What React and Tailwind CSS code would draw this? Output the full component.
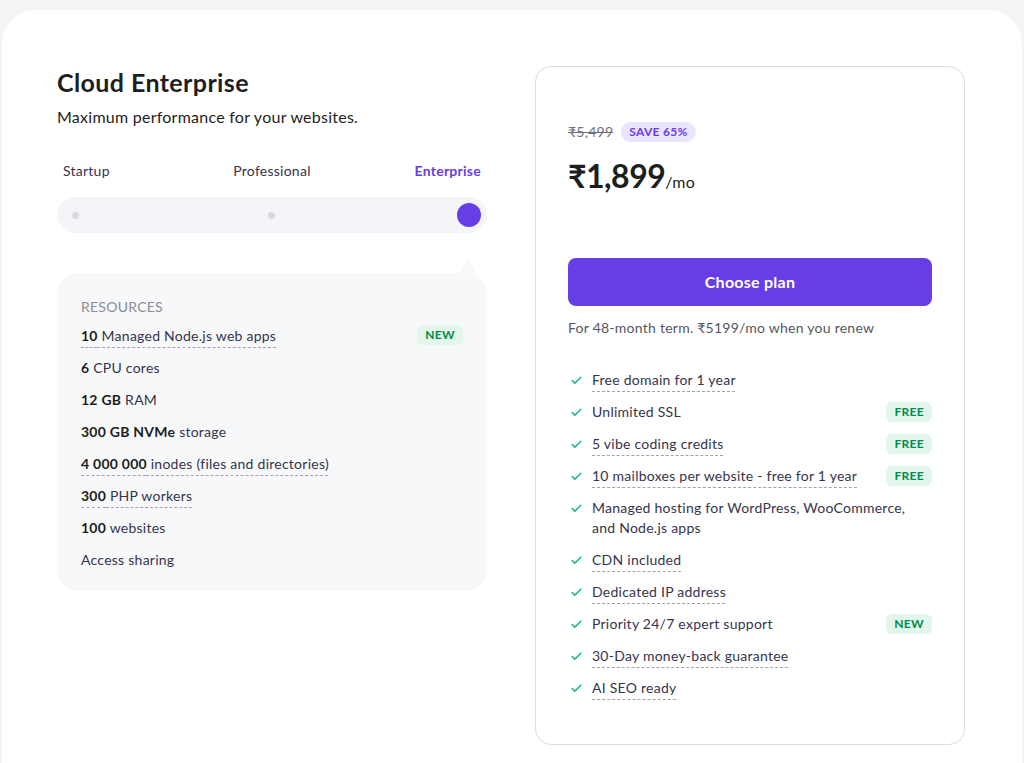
import React from "react";
import { Check } from "lucide-react";

const resources = [
    { bold: "10", rest: " Managed Node.js web apps", dashed: true, badge: "NEW" },
    { bold: "6", rest: " CPU cores" },
    { bold: "12 GB", rest: " RAM" },
    { bold: "300 GB NVMe", rest: " storage" },
    { bold: "4 000 000", rest: " inodes (files and directories)", dashed: true },
    { bold: "300", rest: " PHP workers", dashed: true },
    { bold: "100", rest: " websites" },
    { bold: "", rest: "Access sharing" },
];

const features = [
    { text: "Free domain for 1 year", dashed: true },
    { text: "Unlimited SSL", badge: "FREE" },
    { text: "5 vibe coding credits", dashed: true, badge: "FREE" },
    { text: "10 mailboxes per website - free for 1 year", dashed: true, badge: "FREE" },
    { text: "Managed hosting for WordPress, WooCommerce, and Node.js apps" },
    { text: "CDN included", dashed: true },
    { text: "Dedicated IP address", dashed: true },
    { text: "Priority 24/7 expert support", badge: "NEW" },
    { text: "30-Day money-back guarantee", dashed: true },
    { text: "AI SEO ready", dashed: true },
];

const dashed = "underline decoration-dashed decoration-[#a3a3ad] decoration-1 underline-offset-[6px]";

function Badge({ children }) {
    return (
        <span className="shrink-0 rounded-md bg-[#e2f6ec] px-2 h-5 flex items-center text-[12px] font-bold tracking-wide text-[#008a4b]">
            {children}
        </span>
    );
}

export default function App() {
    return (
        <div className="min-h-screen bg-[#f4f4f4] pt-[10px] px-[2px] text-[#1d1e20] tracking-[0.25px]" style={{ fontFamily: "Lato, 'Noto Sans', 'DejaVu Sans', sans-serif" }}>
            <div className="bg-white rounded-t-[34px] min-h-[753px] pl-[55px] pr-[57px] pt-[56px] flex justify-between">

                {/* Left: plan + slider + resources */}
                <div className="w-[430px]">
                    <h1 className="text-[25px] leading-8 font-bold tracking-[0.4px]">Cloud Enterprise</h1>
                    <p className="mt-[7px] text-[16px] leading-6">Maximum performance for your websites.</p>

                    <div className="mt-8 grid grid-cols-3 px-[6px] text-[14px] leading-5">
                        <span className="text-left text-[#36344d]">Startup</span>
                        <span className="text-center text-[#36344d]">Professional</span>
                        <span className="text-right font-bold text-[#673de6]">Enterprise</span>
                    </div>

                    <div className="mt-4 h-9 rounded-full bg-[#f4f5f8] grid grid-cols-3 items-center px-[6px]">
                        <div className="flex justify-start pl-[9px]"><span className="size-[7px] rounded-full bg-[#d8d8de]"></span></div>
                        <div className="flex justify-center"><span className="size-[7px] rounded-full bg-[#d8d8de]"></span></div>
                        <div className="flex justify-end"><span className="size-6 rounded-full bg-[#673de6]"></span></div>
                    </div>

                    {/* Resources box */}
                    <div className="relative mt-10 rounded-[20px] bg-[#f7f8fa] px-6 pt-6 pb-5">
                        <span className="absolute -top-[15px] right-[12px] w-0 h-0 border-l-[7px] border-r-[7px] border-b-[15px] border-l-transparent border-r-transparent border-b-[#f7f8fa]"></span>
                        <div className="text-[14px] leading-5 text-[#8c8c96] uppercase">Resources</div>
                        <ul className="mt-[6px] flex flex-col gap-2">
                            {resources.map((r, i) => (
                                <li key={i} className="flex items-center justify-between h-6 text-[14px]">
                                    <span className={r.dashed ? dashed : ""}>
                                        {r.bold && <span className="font-bold">{r.bold}</span>}
                                        <span className="text-[#36344d]">{r.rest}</span>
                                    </span>
                                    {r.badge && <Badge>{r.badge}</Badge>}
                                </li>
                            ))}
                        </ul>
                    </div>
                </div>

                {/* Right: pricing card */}
                <div className="w-[430px] h-[679px] rounded-2xl border border-[#dadce0] px-8 pt-[54px] pb-12">
                    <div className="flex items-center gap-2">
                        <span className="text-[14px] text-[#6d7081] line-through">₹5,499</span>
                        <span className="rounded-full bg-[#ebe4ff] px-2 h-5 flex items-center text-[12px] font-bold tracking-wide text-[#673de6]">SAVE 65%</span>
                    </div>
                    <div className="mt-[14px] flex items-baseline">
                        <span className="text-[32px] leading-10 font-bold tracking-[-0.5px]">₹1,899</span>
                        <span className="text-[16px]">/mo</span>
                    </div>

                    <button className="mt-[62px] w-full h-12 rounded-lg bg-[#673de6] text-white text-[16px] font-bold">
                        Choose plan
                    </button>
                    <p className="mt-3 text-[14px] leading-5 text-[#55575f]">For 48-month term. ₹5199/mo when you renew</p>

                    <ul className="mt-8 flex flex-col gap-3">
                        {features.map((f, i) => (
                            <li key={i} className="flex items-start justify-between text-[14px] leading-5">
                                <div className="flex items-start">
                                    <span className="w-6 h-5 flex items-center pl-[2px] shrink-0">
                                        <Check size={13} strokeWidth={2.5} className="text-[#00b090]" />
                                    </span>
                                    <span className={`text-[#36344d] ${f.dashed ? dashed : ""} ${f.text.startsWith("Managed") ? "max-w-[330px]" : ""}`}>{f.text}</span>
                                </div>
                                {f.badge && <Badge>{f.badge}</Badge>}
                            </li>
                        ))}
                    </ul>
                </div>

            </div>
        </div>
    );
}
